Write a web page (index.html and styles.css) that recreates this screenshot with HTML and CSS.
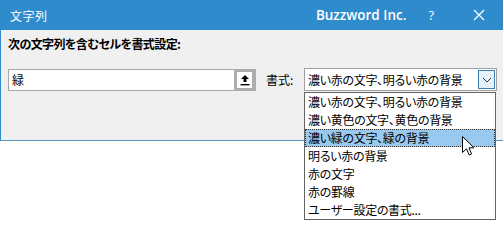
FILE: index.html
```html
<!DOCTYPE html>
<html lang="ja">
<head>
<meta charset="utf-8">
<title>文字列</title>
<link rel="stylesheet" href="styles.css">
</head>
<body>
<div class="window">
  <div class="titlebar">
    <span class="title">文字列</span>
    <span class="brand">Buzzword Inc.</span>
    <span class="help">?</span>
    <span class="close">
      <svg width="12" height="12" viewBox="0 0 12 12"><path d="M1 1 L11 11 M11 1 L1 11" stroke="#fff" stroke-width="1.2" fill="none"/></svg>
    </span>
  </div>
  <div class="body">
    <div class="label">次の文字列を含むセルを書式設定:</div>
    <div class="row">
      <div class="input">
        <span class="value">緑</span>
      </div>
      <div class="refbtn">
        <span class="refinner">
          <svg width="10" height="12" viewBox="0 0 10 12"><path d="M5 1 L9 5 L6.5 5 L6.5 8 L3.5 8 L3.5 5 L1 5 Z" fill="#000"/><rect x="0.5" y="10" width="9" height="1.4" fill="#000"/></svg>
        </span>
      </div>
      <span class="fmtlabel">書式:</span>
      <div class="select">
        <span class="selvalue">濃い赤の文字、明るい赤の背景</span>
        <span class="dropbtn">
          <svg width="10" height="6" viewBox="0 0 10 6"><path d="M1 1 L5 5 L9 1" stroke="#333" stroke-width="1" fill="none"/></svg>
        </span>
      </div>
    </div>
  </div>
</div>
<ul class="list">
  <li>濃い赤の文字、明るい赤の背景</li>
  <li>濃い黄色の文字、黄色の背景</li>
  <li class="active">濃い緑の文字、緑の背景</li>
  <li>明るい赤の背景</li>
  <li>赤の文字</li>
  <li>赤の罫線</li>
  <li>ユーザー設定の書式...</li>
</ul>
<svg class="cursor" width="13" height="20" viewBox="0 0 13 20"><path d="M0.5 0.5 L0.5 16.5 L4.5 12.8 L7.2 19 L9.6 18 L7 11.8 L12 11.8 Z" fill="#fff" stroke="#000" stroke-width="1" stroke-linejoin="miter"/></svg>
</body>
</html>
```
FILE: styles.css
```css
* { box-sizing: border-box; }
html, body { margin: 0; padding: 0; background: #fff; }
body {
  width: 503px;
  height: 240px;
  position: relative;
  overflow: hidden;
  font-family: "Noto Sans CJK JP", "Noto Sans", sans-serif;
  font-feature-settings: "palt";
  color: #000;
}
.window {
  width: 503px;
  border-left: 1px solid #2e8bcc;
  border-bottom: 1px solid #5a98c0;
}
.titlebar {
  height: 30px;
  background: #2e8bcc;
  color: #fff;
  display: flex;
  align-items: center;
  padding-left: 9px;
}
.title {
  font-size: 12px;
  flex: 1;
  letter-spacing: 0.5px;
}
.brand {
  font-family: "Open Sans", "Noto Sans", sans-serif;
  font-weight: 600;
  font-size: 13.5px;
  margin-right: 22px;
}
.help {
  font-family: "Open Sans", sans-serif;
  font-size: 13px;
  margin-right: 39px;
}
.close {
  display: flex;
  margin-right: 18px;
}
.body {
  background: #f0f0f0;
  height: 110px;
  padding: 6px 0 0 7px;
}
.label {
  font-size: 12px;
  font-weight: bold;
  line-height: 16px;
  letter-spacing: -0.6px;
}
.row {
  display: flex;
  align-items: center;
  margin-top: 16px;
}
.input {
  width: 226px;
  height: 22px;
  background: #fff;
  border: 1px solid #a8a8a8;
  border-right: none;
  display: flex;
  align-items: center;
  padding-left: 3px;
  font-size: 12px;
}
.refbtn {
  width: 22px;
  height: 22px;
  border: 2px solid #adadad;
  background: #adadad;
  display: flex;
}
.refinner {
  flex: 1;
  background: #fff;
  margin: 1px 2px 1px 1px;
  display: flex;
  align-items: center;
  justify-content: center;
}
.fmtlabel {
  font-size: 12px;
  margin-left: 10px;
  width: 38px;
}
.select {
  width: 193px;
  height: 23px;
  background: #fff;
  border: 1px solid #a0a0a0;
  display: flex;
  align-items: center;
  padding-left: 3px;
  font-size: 12px;
  letter-spacing: -0.3px;
}
.selvalue { flex: 1; }
.dropbtn {
  width: 17px;
  height: 19px;
  margin-right: 1px;
  background: #e5f1fb;
  border: 1px solid #3c7fb1;
  display: flex;
  align-items: center;
  justify-content: center;
}
.list {
  position: absolute;
  left: 304px;
  top: 92px;
  width: 192px;
  margin: 0;
  padding: 0;
  list-style: none;
  background: #fff;
  border: 1px solid #646464;
  font-size: 12px;
  letter-spacing: -0.3px;
}
.list li {
  height: 18px;
  line-height: 18px;
  padding-left: 3px;
}
.list li.active {
  background: #99c9ef;
  outline: 1px dotted #333;
  outline-offset: -1px;
}
.cursor {
  position: absolute;
  left: 462px;
  top: 136px;
}
```
